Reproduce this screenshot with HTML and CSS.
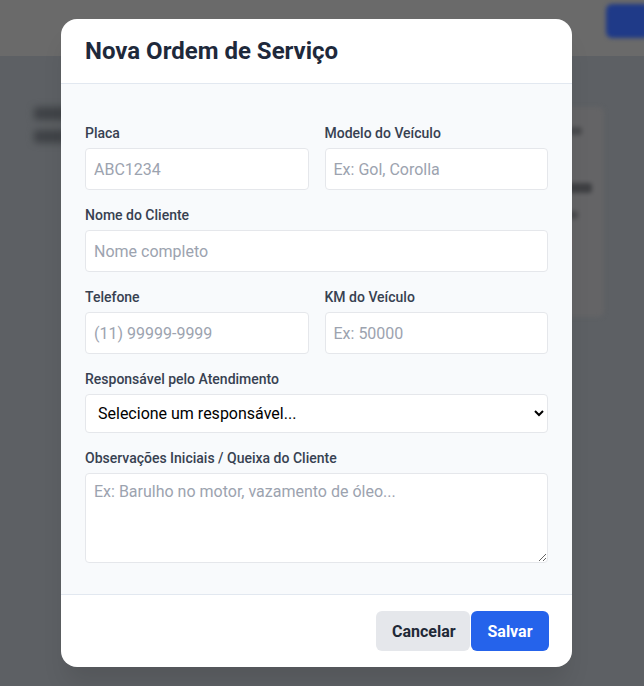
FILE: index.html
```html
<!DOCTYPE html>
<html lang="pt-BR">
<head>
<meta charset="utf-8">
<title>Nova Ordem de Serviço</title>
<link rel="stylesheet" href="styles.css">
</head>
<body>
<div class="app" aria-hidden="true">
  <header class="topbar"><span class="top-btn"></span></header>
  <main class="page">
    <div class="page-title"><span class="bar b1"></span><span class="bar b2"></span></div>
    <div class="side-card"><span class="sc-line l1"></span><span class="sc-line l2"></span><span class="sc-line l3"></span><span class="sc-dot"></span></div>
  </main>
</div>
<div class="overlay">
  <div class="modal" role="dialog" aria-labelledby="mt">
    <div class="modal-header"><h2 id="mt" class="modal-title">Nova Ordem de Serviço</h2></div>
    <form class="modal-body">
      <div class="row two">
        <div class="field"><label class="label">Placa</label><input class="input" placeholder="ABC1234"></div>
        <div class="field"><label class="label">Modelo do Veículo</label><input class="input" placeholder="Ex: Gol, Corolla"></div>
      </div>
      <div class="field"><label class="label">Nome do Cliente</label><input class="input" placeholder="Nome completo"></div>
      <div class="row two">
        <div class="field"><label class="label">Telefone</label><input class="input" placeholder="(11) 99999-9999"></div>
        <div class="field"><label class="label">KM do Veículo</label><input class="input" placeholder="Ex: 50000"></div>
      </div>
      <div class="field"><label class="label">Responsável pelo Atendimento</label>
        <select class="select"><option>Selecione um responsável...</option></select></div>
      <div class="field"><label class="label">Observações Iniciais / Queixa do Cliente</label>
        <textarea class="textarea" placeholder="Ex: Barulho no motor, vazamento de óleo..."></textarea></div>
    </form>
    <div class="modal-footer">
      <button class="btn btn-cancel" type="button">Cancelar</button>
      <button class="btn btn-save" type="button">Salvar</button>
    </div>
  </div>
</div>
</body>
</html>
```
FILE: styles.css
```css
* { box-sizing: border-box; }
html, body { margin: 0; height: 100%; }
body { font-family: Roboto, "Liberation Sans", sans-serif; background: #5d6064; overflow: hidden; }

.app { position: fixed; inset: 0; display: flex; flex-direction: column; }
.topbar { height: 56px; background: #6a6a6a; display: flex; justify-content: flex-end; align-items: flex-start; padding: 4px 0 0; }
.top-btn { width: 44px; height: 34px; margin-right: -6px; background: #1f3a88; border-radius: 6px; filter: blur(2px); }
.page { flex: 1; background: #5d6064; position: relative; display: flex; justify-content: space-between; padding: 51px 0 0 34px; }
.page-title { display: flex; flex-direction: column; gap: 10px; filter: blur(3.5px); }
.bar { display: block; height: 13px; background: #3f4246; border-radius: 3px; }
.b1 { width: 36px; }
.b2 { width: 32px; }
.side-card { width: 60px; height: 210px; margin-right: 40px; background: #646466; border-radius: 6px; filter: blur(2px); display: flex; flex-direction: column; gap: 18px; padding: 20px 0 0 18px; }
.sc-line { display: block; height: 8px; background: #4a4b4e; border-radius: 3px; }
.l1 { width: 14px; margin-left: 6px; }
.l2 { width: 30px; height: 10px; background: #3f4043; margin-top: 30px; }
.l3 { width: 16px; }
.sc-dot { width: 8px; height: 10px; background: #7a5e5e; }

.overlay { position: fixed; inset: 0; display: flex; justify-content: center; align-items: flex-start; padding: 19px 11px 0 0; }
.modal { width: 511px; background: #fff; border-radius: 16px; overflow: hidden; box-shadow: 0 20px 25px -5px rgba(0,0,0,.1); }
.modal-header { height: 65px; padding: 0 24px; display: flex; align-items: center; border-bottom: 1px solid #e2e8f0; }
.modal-title { margin: 0; font-size: 24px; font-weight: 700; color: #1e293b; line-height: 28px; padding-bottom: 1px; }

.modal-body { background: #f8fafc; padding: 39px 24px 31px; display: flex; flex-direction: column; gap: 15px; border-bottom: 1px solid #e2e8f0; }
.row.two { display: grid; grid-template-columns: 1fr 1fr; gap: 16px; }
.field { display: flex; flex-direction: column; }
.label { font-size: 14px; line-height: 20px; font-weight: 500; color: #374151; margin-bottom: 5px; }
.input, .select, .textarea { font-family: Roboto, "Liberation Sans", sans-serif; font-size: 16px; border: 1px solid #e5e7eb; border-radius: 4px; background: #fff; color: #111827; width: 100%; }
.input { height: 42px; padding: 0 8px; }
.input::placeholder, .textarea::placeholder { color: #9ca3af; opacity: 1; }
.select { height: 39px; padding: 0 6px 0 8px; color: #000; }
.textarea { height: 90px; padding: 8px; resize: vertical; display: block; }

.modal-footer { height: 72px; padding: 0 23px 0 24px; display: flex; justify-content: flex-end; align-items: center; gap: 1px; }
.btn { font-family: Roboto, "Liberation Sans", sans-serif; height: 40px; border: 0; border-radius: 6px; font-size: 16px; font-weight: 700; padding: 0 16px; cursor: pointer; }
.btn-cancel { background: #e5e7eb; color: #1f2937; width: 94px; }
.btn-save { background: #2563eb; color: #fff; width: 78px; }
```
